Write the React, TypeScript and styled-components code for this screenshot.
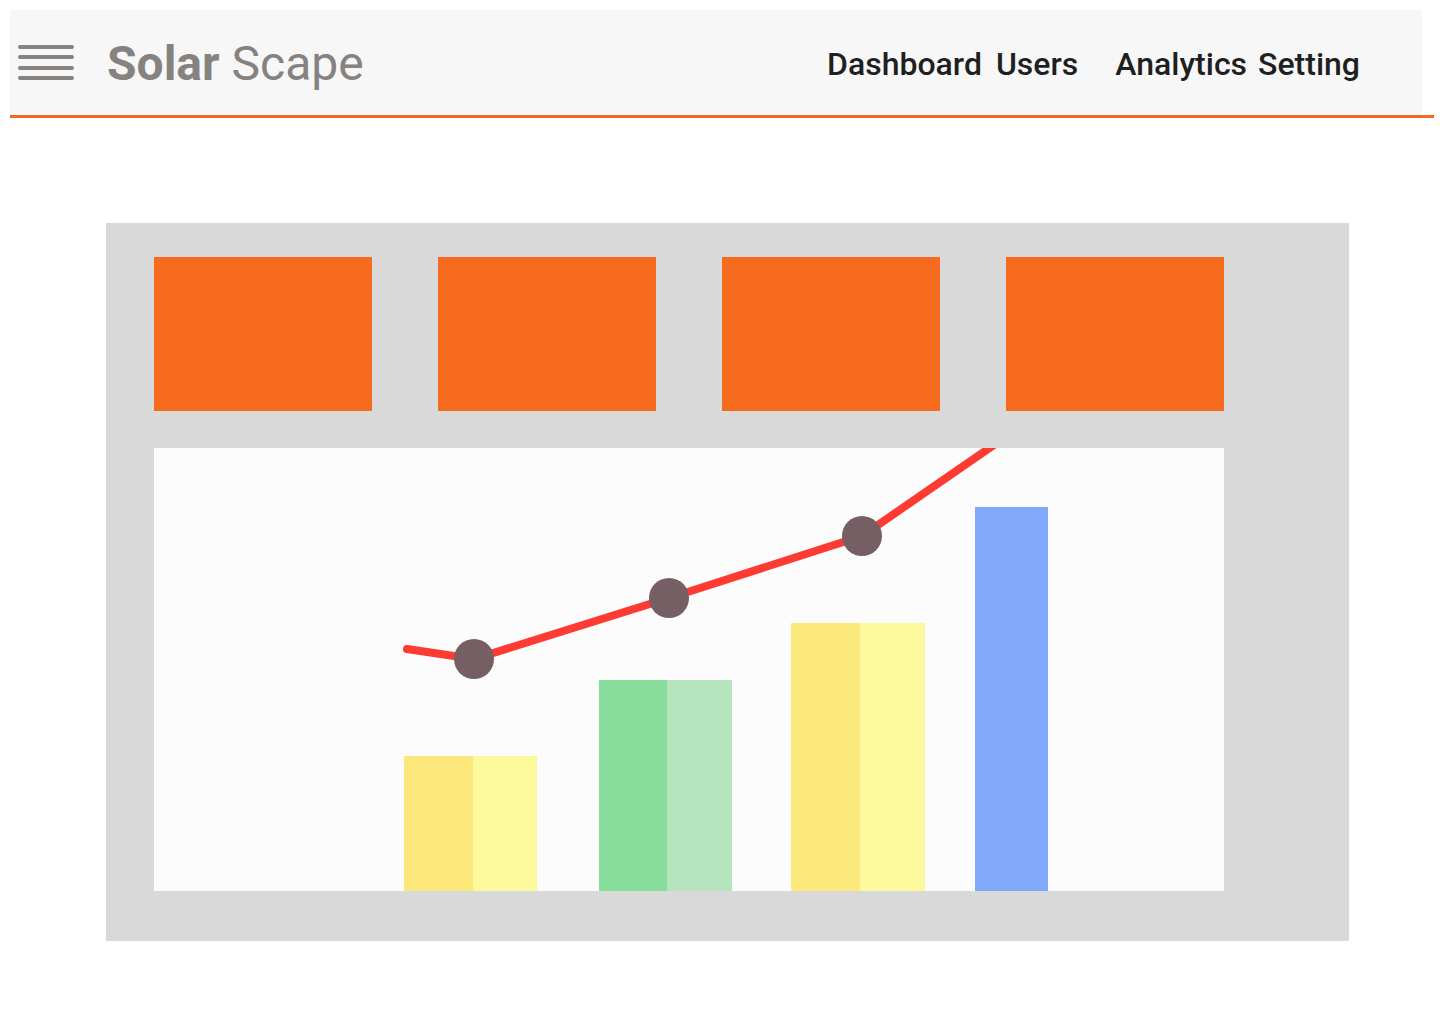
import React from "react";
import styled, { createGlobalStyle } from "styled-components";

const Global = createGlobalStyle`
  html, body { margin: 0; padding: 0; background: #ffffff; }
  body { font-family: Roboto, "Liberation Sans", sans-serif; }
`;

const Page = styled.div`
  padding: 10px 0 0 10px;
  width: 1440px;
  box-sizing: border-box;
`;

const HeaderBar = styled.header`
  width: 1412px;
  height: 105px;
  background: #f7f7f7;
  display: flex;
  align-items: center;
  box-sizing: border-box;
  padding: 0 0 0 8px;
`;

const Rule = styled.div`
  width: 1424px;
  height: 3px;
  background: #ef6a25;
`;

const Burger = styled.button`
  width: 56px;
  height: 36px;
  padding: 0;
  border: 0;
  background: transparent;
  display: flex;
  flex-direction: column;
  justify-content: space-between;
`;

const BurgerLine = styled.span`
  display: block;
  height: 4px;
  border-radius: 2px;
  background: #878381;
`;

const Brand = styled.div`
  margin-left: 33px;
  font-size: 48px;
  color: #858280;
  line-height: 1;
  padding-top: 2px;
`;

const BrandStrong = styled.span`
  font-weight: 700;
`;

const BrandLight = styled.span`
  font-weight: 400;
`;

const Nav = styled.nav`
  margin-left: auto;
  margin-right: 62px;
  display: flex;
  align-items: center;
  padding-top: 2px;
`;

const NavItem = styled.a<{ $gap: number }>`
  margin-left: ${(p) => p.$gap}px;
  font-size: 32px;
  font-weight: 500;
  color: #1f1f1f;
  text-decoration: none;
  line-height: 1;
`;

const Main = styled.main`
  margin: 105px 0 0 96px;
  width: 1243px;
  height: 718px;
  background: #d9d9d9;
  box-sizing: border-box;
  padding: 34px 0 0 48px;
  display: flex;
  flex-direction: column;
  gap: 37px;
`;

const CardRow = styled.div`
  display: flex;
  gap: 66px;
`;

const StatCard = styled.div`
  width: 218px;
  height: 154px;
  background: #f76b1e;
`;

const ChartPanel = styled.div`
  width: 1070px;
  height: 443px;
  background: #fdfcfc;
  overflow: hidden;
`;

const ChartSvg = styled.svg`
  display: block;
`;

type Bar = { x: number; split: number; end: number; top: number; a: string; b?: string };

const bars: Bar[] = [
  { x: 250, split: 319, end: 383, top: 308, a: "#fce87a", b: "#fbf99c" },
  { x: 445, split: 513, end: 578, top: 232, a: "#88dc9c", b: "#b5e4bd" },
  { x: 637, split: 706, end: 771, top: 175, a: "#fce97b", b: "#fbf99b" },
  { x: 821, split: 894, end: 894, top: 59, a: "#80a9f9" },
];

const dots = [
  [320, 211],
  [515, 150],
  [708, 88],
];

export default function App() {
  return (
    <>
      <Global />
      <Page>
        <HeaderBar>
          <Burger aria-label="menu">
            <BurgerLine />
            <BurgerLine />
            <BurgerLine />
            <BurgerLine />
          </Burger>
          <Brand>
            <BrandStrong>Solar</BrandStrong> <BrandLight>Scape</BrandLight>
          </Brand>
          <Nav>
            <NavItem $gap={0}>Dashboard</NavItem>
            <NavItem $gap={14}>Users</NavItem>
            <NavItem $gap={37}>Analytics</NavItem>
            <NavItem $gap={11}>Setting</NavItem>
          </Nav>
        </HeaderBar>
        <Rule />
        <Main>
          <CardRow>
            <StatCard />
            <StatCard />
            <StatCard />
            <StatCard />
          </CardRow>
          <ChartPanel>
            <ChartSvg width="1070" height="443" viewBox="0 0 1070 443">
              {bars.map((b, i) => (
                <g key={i}>
                  <rect x={b.x} y={b.top} width={b.split - b.x} height={443 - b.top} fill={b.a} />
                  {b.b && (
                    <rect x={b.split} y={b.top} width={b.end - b.split} height={443 - b.top} fill={b.b} />
                  )}
                </g>
              ))}
              <polyline
                points="253,201 320,211 515,150 708,88 850,-10"
                fill="none"
                stroke="#fd3b32"
                strokeWidth="8"
                strokeLinecap="round"
                strokeLinejoin="round"
              />
              {dots.map(([cx, cy], i) => (
                <circle key={i} cx={cx} cy={cy} r="20" fill="#765f64" />
              ))}
            </ChartSvg>
          </ChartPanel>
        </Main>
      </Page>
    </>
  );
}
